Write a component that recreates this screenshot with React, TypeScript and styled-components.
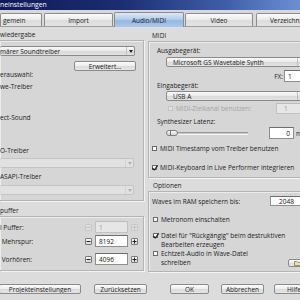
import React from "react";
import styled, { createGlobalStyle } from "styled-components";

const Global = createGlobalStyle`
  html, body { margin: 0; padding: 0; }
  body {
    width: 300px; height: 300px; overflow: hidden;
    background: #dcdcdc;
    font-family: "Open Sans", "Noto Sans", sans-serif;
    font-size: 6.5px;
    color: #1c1c1c;
  }
  * { box-sizing: border-box; }
`;

const Screen = styled.div`
  width: 300px;
  height: 300px;
  overflow: hidden;
  display: flex;
  flex-direction: column;
  background: #dcdcdc;
`;

const TitleBar = styled.div`
  height: 10px;
  flex: none;
  background: linear-gradient(90deg, #0e1b58 0%, #1b2d70 40%, #3f5ea8 75%, #6d8fd2 100%);
  color: #ffffff;
  line-height: 10px;
  font-size: 6.8px;
  white-space: nowrap;
`;

const TabStrip = styled.div`
  height: 17px;
  flex: none;
  display: flex;
  align-items: flex-end;
  background: #d8d8d8;
  border-bottom: 1px solid #9e9e9e;
`;

const Tab = styled.div<{ $w: number; $ml?: number; $active?: boolean; $align?: string }>`
  width: ${(p) => p.$w}px;
  margin-left: ${(p) => p.$ml ?? 0}px;
  flex: none;
  height: ${(p) => (p.$active ? 15 : 13)}px;
  margin-bottom: ${(p) => (p.$active ? -1 : 0)}px;
  display: flex;
  align-items: center;
  justify-content: ${(p) => p.$align ?? "center"};
  padding-left: ${(p) => (p.$align ? 2 : 0)}px;
  white-space: nowrap;
  overflow: hidden;
  border: 1px solid #8c8c8c;
  border-bottom: none;
  border-radius: 2px 2px 0 0;
  background: ${(p) =>
    p.$active
      ? "linear-gradient(#dbe9f8, #b2cdec 45%, #94b8e2 55%, #a9c8ea)"
      : "linear-gradient(#fbfbfb, #ececec 45%, #dcdcdc 55%, #e4e4e4)"};
`;

const Body = styled.div`
  display: flex;
  gap: 4px;
  flex: none;
`;

const Column = styled.div<{ $w: number }>`
  width: ${(p) => p.$w}px;
  flex: none;
  display: flex;
  flex-direction: column;
`;

const Caption = styled.div<{ $h: number; $pl?: number }>`
  height: ${(p) => p.$h}px;
  padding-left: ${(p) => p.$pl ?? 0}px;
  display: flex;
  align-items: flex-end;
  line-height: 8px;
  padding-bottom: 1px;
  white-space: nowrap;
`;

const Group = styled.div<{ $side: "left" | "right"; $pb?: number }>`
  display: flex;
  flex-direction: column;
  background: #d6d6d6;
  border: 1px solid #b4b4b4;
  border-left-width: ${(p) => (p.$side === "left" ? 0 : 1)}px;
  border-right-width: ${(p) => (p.$side === "right" ? 0 : 1)}px;
  box-shadow: 1px 1px 0 #f3f3f3, inset 1px 1px 0 #ececec;
  padding-bottom: ${(p) => p.$pb ?? 0}px;
`;

const Line = styled.div<{ $mt?: number; $pl?: number; $h?: number; $muted?: boolean }>`
  margin-top: ${(p) => p.$mt ?? 0}px;
  padding-left: ${(p) => p.$pl ?? 0}px;
  height: ${(p) => p.$h ?? 8}px;
  line-height: ${(p) => p.$h ?? 8}px;
  white-space: nowrap;
  color: ${(p) => (p.$muted ? "#a2a2a2" : "inherit")};
`;

const Select = styled.div<{ $mt?: number; $ml?: number; $mr?: number; $h?: number; $cut?: boolean; $disabled?: boolean }>`
  margin-top: ${(p) => p.$mt ?? 0}px;
  margin-left: ${(p) => p.$ml ?? 0}px;
  margin-right: ${(p) => p.$mr ?? 0}px;
  height: ${(p) => p.$h ?? 10}px;
  display: flex;
  align-items: center;
  padding-left: ${(p) => (p.$cut ? 0 : 6)}px;
  border: 1px solid ${(p) => (p.$disabled ? "#c4c4c4" : "#8a8a8a")};
  border-left-width: ${(p) => (p.$cut ? 0 : 1)}px;
  border-radius: 2px;
  background: ${(p) =>
    p.$disabled ? "#e1e1e1" : "linear-gradient(#f8f8f8, #ebebeb 45%, #dadada 55%, #e2e2e2)"};
  white-space: nowrap;
  overflow: hidden;
`;

const SelectText = styled.span`
  flex: 1;
  overflow: hidden;
`;

const Arrow = styled.span<{ $disabled?: boolean }>`
  width: 8px;
  height: 100%;
  flex: none;
  display: flex;
  align-items: center;
  justify-content: center;
  border-left: 1px solid ${(p) => (p.$disabled ? "#d2d2d2" : "#c2c2c2")};
  color: ${(p) => (p.$disabled ? "#b0b0b0" : "#222")};
`;

const ArrowIcon = ({ disabled }: { disabled?: boolean }) => (
  <Arrow $disabled={disabled}>
    <svg width="4" height="3" viewBox="0 0 4 3">
      <path d="M0 0 H4 L2 3 Z" fill="currentColor" />
    </svg>
  </Arrow>
);

const ButtonRow = styled.div<{ $mt?: number; $pr?: number }>`
  display: flex;
  justify-content: flex-end;
  margin-top: ${(p) => p.$mt ?? 0}px;
  padding-right: ${(p) => p.$pr ?? 0}px;
`;

const Button = styled.div<{ $w: number; $h?: number; $ml?: number }>`
  width: ${(p) => p.$w}px;
  height: ${(p) => p.$h ?? 10}px;
  margin-left: ${(p) => p.$ml ?? 0}px;
  flex: none;
  display: flex;
  align-items: center;
  justify-content: center;
  border: 1px solid #8a8a8a;
  border-radius: 2px;
  background: linear-gradient(#fcfcfc, #eeeeee 45%, #dcdcdc 55%, #e6e6e6);
  white-space: nowrap;
  overflow: hidden;
`;

const Field = styled.div<{ $w: number; $h?: number; $disabled?: boolean; $right?: boolean; $pl?: number }>`
  width: ${(p) => p.$w}px;
  height: ${(p) => p.$h ?? 12}px;
  flex: none;
  display: flex;
  align-items: center;
  justify-content: ${(p) => (p.$right ? "flex-end" : "flex-start")};
  padding: 0 3px 0 ${(p) => p.$pl ?? 3}px;
  background: ${(p) => (p.$disabled ? "#e6e6e6" : "#ffffff")};
  border: 1px solid ${(p) => (p.$disabled ? "#c2c2c2" : "#8e8e8e")};
  border-top-color: ${(p) => (p.$disabled ? "#bcbcbc" : "#6e6e6e")};
  color: ${(p) => (p.$disabled ? "#9c9c9c" : "#111")};
  white-space: nowrap;
`;

const SpinRow = styled.div<{ $mt: number }>`
  margin-top: ${(p) => p.$mt}px;
  height: 12px;
  display: grid;
  grid-template-columns: 1fr 7px 33px 7px;
  column-gap: 3px;
  align-items: center;
  padding-right: 5px;
  white-space: nowrap;
`;

const SpinButton = styled.div<{ $disabled?: boolean }>`
  width: 7px;
  height: 7px;
  display: flex;
  align-items: center;
  justify-content: center;
  border: 1px solid ${(p) => (p.$disabled ? "#c8c8c8" : "#7a7a7a")};
  border-radius: 1px;
  background: ${(p) => (p.$disabled ? "#dedede" : "linear-gradient(#fafafa, #d8d8d8)")};
  color: ${(p) => (p.$disabled ? "#c0c0c0" : "#222")};
`;

const Sign = ({ plus, disabled }: { plus?: boolean; disabled?: boolean }) => (
  <SpinButton $disabled={disabled}>
    <svg width="5" height="5" viewBox="0 0 5 5">
      <path d="M0.5 2.5 H4.5" stroke="currentColor" strokeWidth="1" />
      {plus && <path d="M2.5 0.5 V4.5" stroke="currentColor" strokeWidth="1" />}
    </svg>
  </SpinButton>
);

const RowFlex = styled.div<{ $mt?: number; $h?: number; $pl?: number; $gap?: number }>`
  margin-top: ${(p) => p.$mt ?? 0}px;
  height: ${(p) => p.$h ?? 12}px;
  padding-left: ${(p) => p.$pl ?? 0}px;
  display: flex;
  align-items: center;
  gap: ${(p) => p.$gap ?? 0}px;
  white-space: nowrap;
`;

const Grow = styled.span<{ $muted?: boolean }>`
  flex: 1;
  color: ${(p) => (p.$muted ? "#a4a4a4" : "inherit")};
`;

const Unit = styled.span`
  margin-left: 2px;
  width: 14px;
  flex: none;
`;

const Box = styled.span<{ $disabled?: boolean }>`
  width: 5px;
  height: 5px;
  flex: none;
  display: inline-flex;
  align-items: center;
  justify-content: center;
  border: 1px solid ${(p) => (p.$disabled ? "#c4c4c4" : "#6a6a6a")};
  background: ${(p) => (p.$disabled ? "#e4e4e4" : "#fbfbfb")};
  color: #1a1a1a;
  overflow: visible;
`;

const CheckMark = styled.svg`
  overflow: visible;
  flex: none;
`;

const Check = ({ checked, disabled }: { checked?: boolean; disabled?: boolean }) => (
  <Box $disabled={disabled}>
    {checked && (
      <CheckMark width="6" height="6" viewBox="0 0 6 6">
        <path d="M0.3 3 L2.2 5 L5.8 0.4" fill="none" stroke="currentColor" strokeWidth="1.1" />
      </CheckMark>
    )}
  </Box>
);

const CheckItem = styled.div<{ $mt?: number; $pl?: number }>`
  margin-top: ${(p) => p.$mt ?? 0}px;
  padding-left: ${(p) => p.$pl ?? 0}px;
  display: flex;
  align-items: flex-start;
  gap: 3px;
  line-height: 9px;
  white-space: nowrap;
  & > span:first-child { margin-top: 2px; }
`;

const CheckText = styled.div`
  flex: 1;
  display: flex;
  flex-direction: column;
`;

const SliderTrack = styled.div`
  width: 81px;
  height: 3px;
  flex: none;
  margin-left: 18px;
  display: flex;
  align-items: center;
  border-top: 1px solid #9a9a9a;
  border-bottom: 1px solid #f4f4f4;
  background: #c8c8c8;
`;

const Thumb = styled.div`
  width: 12px;
  height: 6px;
  margin-left: -1px;
  flex: none;
  border: 1px solid #7e7e7e;
  border-radius: 3px;
  background: linear-gradient(#fdfdfd, #d2d2d2);
  display: flex;
  align-items: center;
  padding-left: 3px;
  &::before {
    content: "";
    width: 1px;
    height: 4px;
    background: #6e6e6e;
  }
`;

const Spacer = styled.span`
  flex: 1;
`;

const Footer = styled.div`
  margin-top: 12px;
  display: flex;
  height: 10px;
`;

const Folder = () => (
  <svg width="7" height="5" viewBox="0 0 7 5">
    <path d="M0.5 0.5 H2.5 L3.2 1.2 H6.5 V4.5 H0.5 Z" fill="#f1e3a8" stroke="#7a6a3a" strokeWidth="0.7" />
  </svg>
);

export default function App() {
  return (
    <>
      <Global />
      <Screen>
        <TitleBar>neinstellungen</TitleBar>
        <TabStrip>
          <Tab $w={42} $align="flex-start">gemein</Tab>
          <Tab $w={69} $ml={2}>Import</Tab>
          <Tab $w={70} $ml={1} $active>Audio/MIDI</Tab>
          <Tab $w={68} $ml={1}>Video</Tab>
          <Tab $w={69} $ml={3}>Verzeichnisse</Tab>
        </TabStrip>
        <Body>
          <Column $w={144}>
            <Caption $h={13}>wiedergabe</Caption>
            <Group $side="left" $pb={5}>
              <Select $mt={5} $mr={8} $cut>
                <SelectText>märer Soundtreiber</SelectText>
                <ArrowIcon />
              </Select>
              <ButtonRow $mt={5} $pr={7}>
                <Button $w={62}>Erweitert...</Button>
              </ButtonRow>
              <Line $mt={0}>erauswahl:</Line>
              <Line $mt={4}>we-Treiber</Line>
              <Line $mt={23}>ect-Sound</Line>
              <Line $mt={25}>O-Treiber</Line>
              <Select $mt={3} $mr={9} $cut $disabled>
                <SelectText />
                <ArrowIcon disabled />
              </Select>
              <Line $mt={5}>ASAPI-Treiber</Line>
              <Select $mt={4} $mr={9} $cut $disabled>
                <SelectText />
                <ArrowIcon disabled />
              </Select>
            </Group>
            <Caption $h={15}>puffer</Caption>
            <Group $side="left" $pb={5}>
              <SpinRow $mt={4}>
                <span>l Puffer:</span>
                <Sign disabled />
                <Field $w={33} $disabled>1</Field>
                <Sign plus disabled />
              </SpinRow>
              <SpinRow $mt={2}>
                <span>&nbsp;Mehrspur:</span>
                <Sign />
                <Field $w={33}>8192</Field>
                <Sign plus />
              </SpinRow>
              <SpinRow $mt={6}>
                <span>&nbsp;Vorhören:</span>
                <Sign />
                <Field $w={33}>4096</Field>
                <Sign plus />
              </SpinRow>
            </Group>
          </Column>
          <Column $w={162}>
            <Caption $h={14} $pl={4}>MIDI</Caption>
            <Group $side="right" $pb={5}>
              <Line $mt={5} $pl={8}>Ausgabegerät:</Line>
              <Select $mt={2} $ml={17} $mr={4}>
                <SelectText>Microsoft GS Wavetable Synth</SelectText>
                <ArrowIcon />
              </Select>
              <RowFlex $mt={3} $h={12} $gap={1}>
                <Spacer />
                <span>FX:</span>
                <Field $w={26}>1</Field>
              </RowFlex>
              <Line $mt={0} $h={7} $pl={8}>Eingabegerät:</Line>
              <Select $mt={2} $ml={17} $mr={4}>
                <SelectText>USB A</SelectText>
                <ArrowIcon />
              </Select>
              <RowFlex $mt={2} $h={11} $pl={19} $gap={3}>
                <Check disabled />
                <Grow $muted>MIDI-Zielkanal benutzen:</Grow>
                <Field $w={34} $h={11} $disabled $pl={7}>1</Field>
              </RowFlex>
              <Line $mt={4} $pl={8}>Synthesizer Latenz:</Line>
              <RowFlex $mt={1} $h={12}>
                <SliderTrack>
                  <Thumb />
                </SliderTrack>
                <Spacer />
                <Field $w={25} $right>0</Field>
                <Unit>ms</Unit>
              </RowFlex>
              <CheckItem $mt={5} $pl={3}>
                <Check />
                <CheckText>MIDI Timestamp vom Treiber benutzen</CheckText>
              </CheckItem>
              <CheckItem $mt={10} $pl={3}>
                <Check checked />
                <CheckText>MIDI-Keyboard in Live Performer integrieren</CheckText>
              </CheckItem>
            </Group>
            <Caption $h={13} $pl={5}>Optionen</Caption>
            <Group $side="right" $pb={4}>
              <RowFlex $mt={4} $h={10} $pl={3}>
                <Grow>Waves im RAM speichern bis:</Grow>
                <Field $w={40} $h={10} $pl={8}>2048</Field>
              </RowFlex>
              <CheckItem $mt={9} $pl={4}>
                <Check />
                <CheckText>Metronom einschalten</CheckText>
              </CheckItem>
              <CheckItem $mt={7} $pl={4}>
                <Check checked />
                <CheckText>
                  <span>Datei für "Rückgängig" beim destruktiven</span>
                  <span>Bearbeiten erzeugen</span>
                </CheckText>
              </CheckItem>
              <CheckItem $mt={0} $pl={4}>
                <Check />
                <CheckText>
                  <span>Echtzeit-Audio in Wave-Datei</span>
                  <span>schreiben</span>
                </CheckText>
                <ButtonRow $mt={10} $pr={4}>
                  <Button $w={18} $h={8}>
                    <Folder />
                  </Button>
                </ButtonRow>
              </CheckItem>
            </Group>
          </Column>
        </Body>
        <Footer>
          <Button $w={82} $ml={-1}>Projekteinstellungen</Button>
          <Button $w={53} $ml={13}>Zurücksetzen</Button>
          <Button $w={39} $ml={23}>OK</Button>
          <Button $w={43} $ml={12}>Abbrechen</Button>
          <Button $w={40} $ml={10}>Hilfe</Button>
        </Footer>
      </Screen>
    </>
  );
}
